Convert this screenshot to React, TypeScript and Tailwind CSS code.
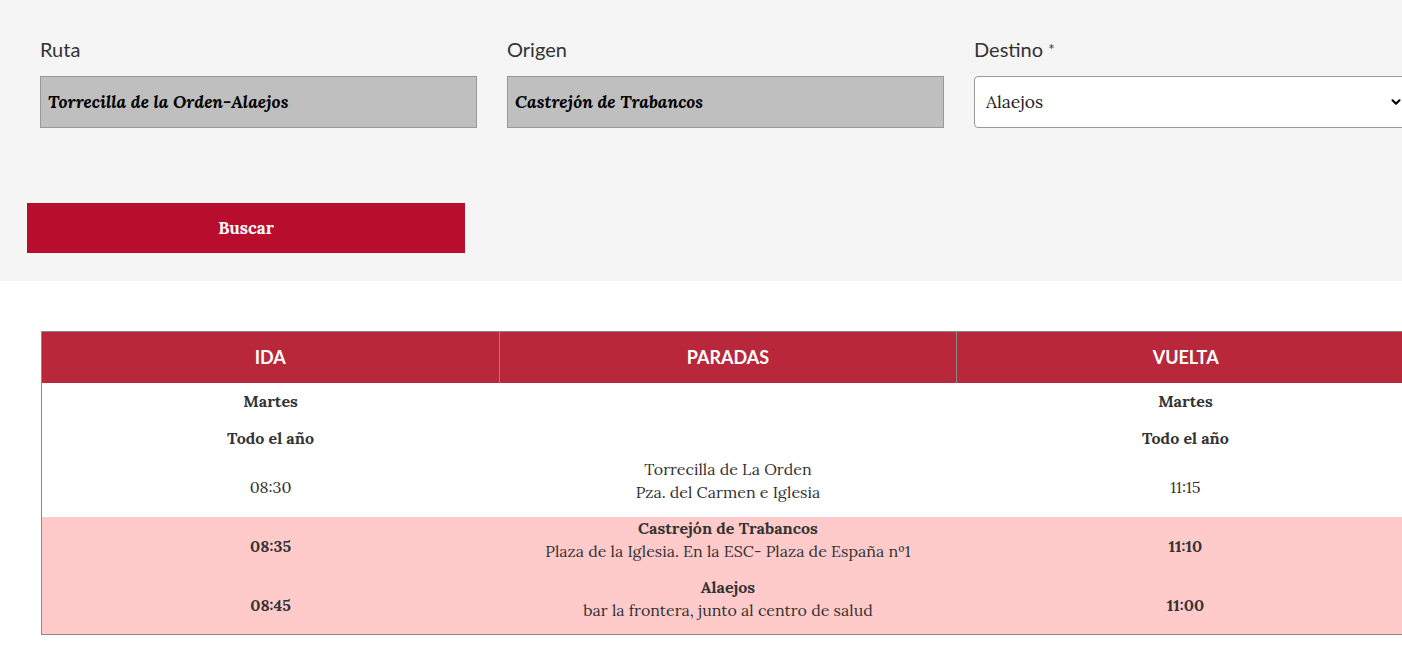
import { ChevronDown } from "lucide-react"

const serif = "font-['Lora','Liberation_Serif',serif]"
const sans = "font-['Lato','Liberation_Sans',sans-serif]"

interface Stop {
  ida: string
  name?: string
  detail: string
  vuelta: string
  highlight?: boolean
}

const stops: Stop[] = [
  { ida: "08:30", name: "Torrecilla de La Orden", detail: "Pza. del Carmen e Iglesia", vuelta: "11:15" },
  { ida: "08:35", name: "Castrejón de Trabancos", detail: "Plaza de la Iglesia. En la ESC- Plaza de España nº1", vuelta: "11:10", highlight: true },
  { ida: "08:45", name: "Alaejos", detail: "bar la frontera, junto al centro de salud", vuelta: "11:00", highlight: true },
]

function Field({ label, value }: { label: string; value: string }) {
  return (
    <div className="w-[437px] shrink-0">
      <div className={`${sans} text-[20px] leading-[27px] text-[#333] mb-[13px]`}>{label}</div>
      <div className={`h-[52px] bg-[#bfbfbf] border border-[#999] flex items-center px-[7px] ${serif} italic font-bold text-[17.5px] text-black`}>
        {value}
      </div>
    </div>
  )
}

export default function App() {
  return (
    <div className="w-full min-h-[670px] bg-white overflow-hidden">
      {/* Search form */}
      <div className="bg-[#f5f5f5] h-[281px] pt-[36px]">
        <div className="flex gap-[30px] pl-[40px]">
          <Field label="Ruta" value="Torrecilla de la Orden-Alaejos" />
          <Field label="Origen" value="Castrejón de Trabancos" />
          <div className="w-[437px] shrink-0">
            <div className={`${sans} text-[20px] leading-[27px] text-[#333] mb-[13px]`}>
              Destino <span className="text-[15px] align-top">*</span>
            </div>
            <div className={`h-[52px] bg-white border border-[#999] rounded-[4px] flex items-center justify-between pl-[11px] pr-[7px] ${serif} text-[17.5px] text-[#222]`}>
              <span>Alaejos</span>
              <ChevronDown size={14} strokeWidth={3.5} className="text-black" />
            </div>
          </div>
        </div>
        <button className={`ml-[27px] mt-[75px] w-[438px] h-[50px] bg-[#b90d2e] text-white ${serif} font-bold text-[17px] pt-[2px]`}>
          Buscar
        </button>
      </div>

      {/* Timetable */}
      <div className="pt-[50px] pl-[41px]">
        <table className={`w-[1374px] border-collapse border border-[#888] ${serif} text-[16px] text-[#333]`}>
          <thead>
            <tr className={`bg-[#b8283a] text-white ${sans} font-bold text-[18px]`}>
              <th className="w-[458px] h-[51px] border-r border-[#888] font-bold">IDA</th>
              <th className="w-[458px] h-[51px] border-r border-[#888] font-bold">PARADAS</th>
              <th className="w-[458px] h-[51px] font-bold">VUELTA</th>
            </tr>
          </thead>
          <tbody className="text-center">
            <tr>
              <td className="h-[37px] font-bold">Martes</td>
              <td></td>
              <td className="h-[37px] font-bold">Martes</td>
            </tr>
            <tr>
              <td className="h-[37px] font-bold">Todo el año</td>
              <td></td>
              <td className="h-[37px] font-bold">Todo el año</td>
            </tr>
            {stops.map((s, i) => (
              <tr key={i} className={s.highlight ? "bg-[#ffcaca]" : ""}>
                <td className={`${s.highlight ? "h-[59px] font-bold" : "h-[60px]"}`}>{s.ida}</td>
                <td className="leading-[23px] pb-[12px]">
                  <div className={s.highlight ? "font-bold" : ""}>{s.name}</div>
                  <div>{s.detail}</div>
                </td>
                <td className={s.highlight ? "font-bold" : ""}>{s.vuelta}</td>
              </tr>
            ))}
          </tbody>
        </table>
      </div>
    </div>
  )
}
